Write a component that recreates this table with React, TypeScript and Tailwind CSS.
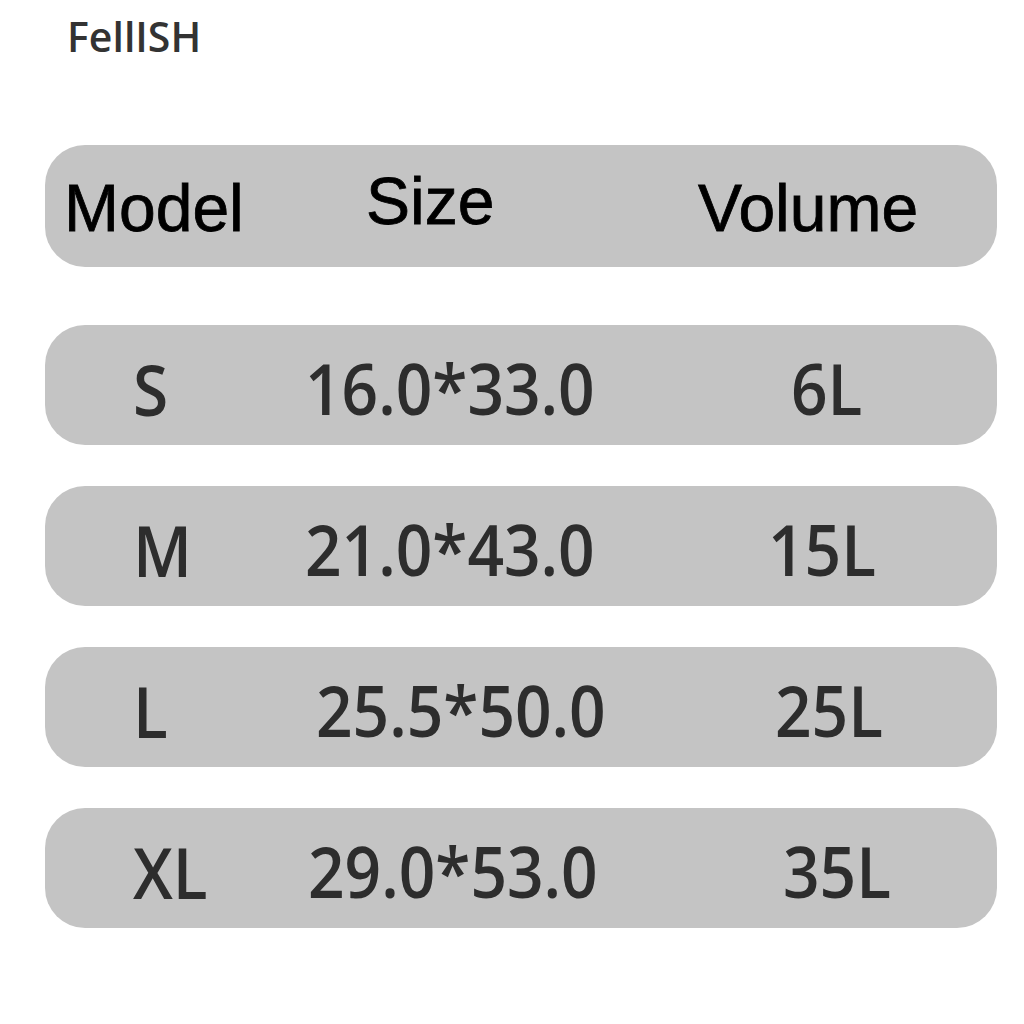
export default function App() {
  const rows = [
    { model: 'S', size: '16.0*33.0', vol: '6L', sizePad: 'pl-0', volPad: 'pl-[23px]' },
    { model: 'M', size: '21.0*43.0', vol: '15L', sizePad: 'pl-0', volPad: 'pl-0' },
    { model: 'L', size: '25.5*50.0', vol: '25L', sizePad: 'pl-[11px]', volPad: 'pl-[7px]' },
    { model: 'XL', size: '29.0*53.0', vol: '35L', sizePad: 'pl-[3px]', volPad: 'pl-[15px]' },
  ]

  return (
    <div className="w-[1024px] h-[1024px] bg-white relative overflow-hidden">
      {/* brand */}
      <div className="pl-[67px] pt-[12px] h-[145px]">
        <span className="text-[41px] leading-[48px] font-semibold text-[#333333] font-['Open_Sans',sans-serif]">
          FellISH
        </span>
      </div>

      <div className="px-[45px] flex flex-col">
        {/* header */}
        <div className="w-[952px] h-[122px] rounded-[40px] bg-[#c4c4c4] flex items-center font-['Liberation_Sans',Arial,sans-serif] text-[66px] text-black [-webkit-text-stroke:0.8px_black]">
          <span className="pl-[19px] w-[321px] pt-[4px]">Model</span>
          <span className="w-[332px] -mt-[10px]">Size</span>
          <span className="pt-[4px]">Volume</span>
        </div>

        <div className="mt-[58px] flex flex-col gap-[41px]">
          {rows.map((r) => (
            <div
              key={r.model}
              className="w-[952px] h-[120px] rounded-[40px] bg-[#c4c4c4] flex items-center font-['Open_Sans',sans-serif] font-semibold text-[64px] text-[#2d2d2d]"
            >
              <span className="pl-[88px] w-[260px] pt-[8px] inline-block scale-y-[1.1]">{r.model}</span>
              <div className="w-[463px] pt-[8px]">
                <span className={`${r.sizePad} inline-block scale-y-[1.1]`}>{r.size}</span>
              </div>
              <div className="pt-[8px]">
                <span className={`${r.volPad} inline-block scale-y-[1.1]`}>{r.vol}</span>
              </div>
            </div>
          ))}
        </div>
      </div>
    </div>
  )
}
